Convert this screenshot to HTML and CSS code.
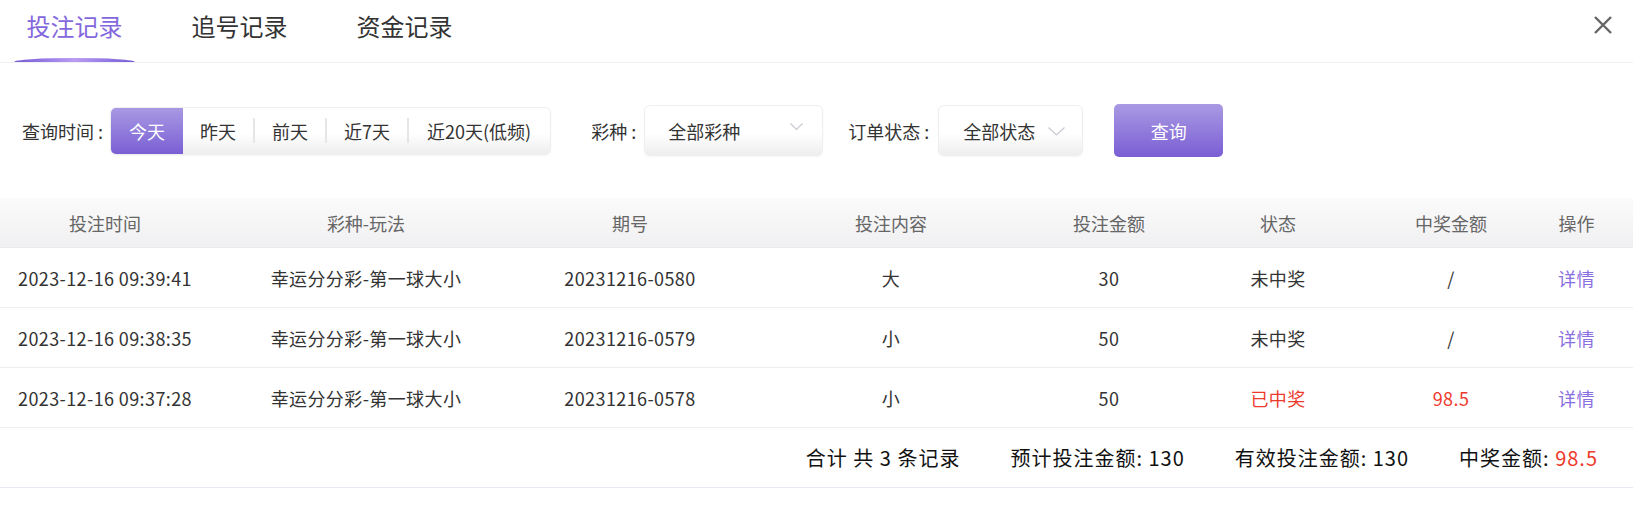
FILE: index.html
```html
<!DOCTYPE html>
<html lang="zh-CN">
<head>
<meta charset="utf-8">
<title>投注记录</title>
<link rel="stylesheet" href="styles.css">
</head>
<body>
<div class="panel">
  <div class="tabs">
    <div class="tab active">投注记录</div>
    <div class="tab">追号记录</div>
    <div class="tab">资金记录</div>
    <button class="close" aria-label="关闭">
      <svg width="20" height="20" viewBox="0 0 20 20"><path d="M2 2 L18 18 M18 2 L2 18" stroke="#666" stroke-width="2.4" stroke-linecap="butt" fill="none"/></svg>
    </button>
  </div>

  <div class="filters">
    <span class="label label-time">查询时间 :</span>
    <div class="segmented">
      <span class="seg on">今天</span>
      <span class="seg">昨天</span>
      <i class="sep"></i>
      <span class="seg">前天</span>
      <i class="sep"></i>
      <span class="seg">近7天</span>
      <i class="sep"></i>
      <span class="seg seg-last">近20天(低频)</span>
    </div>
    <span class="label label-lottery">彩种 :</span>
    <div class="select select-lottery">
      <span>全部彩种</span>
      <svg class="chev" width="13" height="8" viewBox="0 0 13 8"><path d="M0.5 0.5 L6.5 6.5 L12.5 0.5" stroke="#c9c9d2" stroke-width="1.2" fill="none"/></svg>
    </div>
    <span class="label label-status">订单状态 :</span>
    <div class="select select-status">
      <span>全部状态</span>
      <svg class="chev" width="17" height="9" viewBox="0 0 17 9"><path d="M0.5 0.5 L8.5 8 L16.5 0.5" stroke="#c9c9d2" stroke-width="1.2" fill="none"/></svg>
    </div>
    <button class="query">查询</button>
  </div>

  <div class="table">
    <div class="row head">
      <div>投注时间</div><div>彩种-玩法</div><div>期号</div><div>投注内容</div><div>投注金额</div><div>状态</div><div>中奖金额</div><div>操作</div>
    </div>
    <div class="row">
      <div>2023-12-16 09:39:41</div><div>幸运分分彩-第一球大小</div><div>20231216-0580</div><div>大</div><div>30</div><div>未中奖</div><div>/</div><div class="link">详情</div>
    </div>
    <div class="row">
      <div>2023-12-16 09:38:35</div><div>幸运分分彩-第一球大小</div><div>20231216-0579</div><div>小</div><div>50</div><div>未中奖</div><div>/</div><div class="link">详情</div>
    </div>
    <div class="row">
      <div>2023-12-16 09:37:28</div><div>幸运分分彩-第一球大小</div><div>20231216-0578</div><div>小</div><div>50</div><div class="red">已中奖</div><div class="red">98.5</div><div class="link">详情</div>
    </div>
    <div class="summary">
      <span>合计 共 3 条记录</span>
      <span>预计投注金额: 130</span>
      <span>有效投注金额: 130</span>
      <span>中奖金额: <em class="red">98.5</em></span>
    </div>
  </div>
</div>
</body>
</html>
```

FILE: styles.css
```css
* { box-sizing: border-box; }
html, body { margin: 0; padding: 0; background: #fff; }
body {
  font-family: "Noto Sans CJK SC", "Noto Sans", sans-serif;
  font-size: 18px;
  color: #333;
  width: 1633px;
  height: 516px;
  overflow: hidden;
}

.tabs {
  display: flex;
  align-items: flex-start;
  height: 63px;
  padding-left: 14px;
  border-bottom: 1px solid #f0f0f2;
}
.tab {
  position: relative;
  width: 121px;
  height: 62px;
  margin-right: 44px;
  padding-top: 9px;
  text-align: center;
  font-size: 24px;
  line-height: 34px;
  color: #333;
}
.tab.active { color: #8467dc; }
.tab.active::after {
  content: "";
  position: absolute;
  left: 0;
  right: 0;
  bottom: 0;
  height: 4px;
  border-radius: 50% 50% 0 0 / 100% 100% 0 0;
  background: linear-gradient(90deg, #7559d4 0%, #9c80e8 30%, #bb9cf3 50%, #9c80e8 70%, #7559d4 100%);
}
.close {
  margin-left: auto;
  margin-right: 20px;
  margin-top: 15px;
  padding: 0;
  border: 0;
  background: none;
  width: 20px;
  height: 20px;
  display: flex;
}

.filters {
  display: flex;
  align-items: center;
  height: 53px;
  margin-top: 41px;
  padding-left: 22px;
}
.label { line-height: 26px; color: #333; white-space: nowrap; }
.label-time { margin-right: 7px; }
.label-lottery { margin-left: 40px; margin-right: 8px; }
.label-status { margin-left: 25px; margin-right: 9px; }

.segmented {
  display: flex;
  align-items: center;
  height: 48px;
  border: 1px solid #eeeef0;
  border-radius: 6px;
  overflow: hidden;
  background: linear-gradient(#ffffff 55%, #eeeeee 100%);
  box-shadow: 0 1px 2px rgba(0,0,0,0.04);
}
.seg {
  display: flex;
  align-items: center;
  justify-content: center;
  height: 100%;
  padding: 0 17px;
  line-height: 26px;
  color: #333;
  white-space: nowrap;
}
.seg-last { padding: 0 19px 0 18px; }
.seg.on {
  width: 72px;
  padding: 0;
  color: #fff;
  background: linear-gradient(#a899e3, #7a5fd4);
}
.sep {
  display: block;
  width: 2px;
  height: 25px;
  background: #e6e6e8;
  flex: none;
}

.select {
  display: flex;
  align-items: center;
  justify-content: space-between;
  height: 51px;
  border: 1px solid #eeeef0;
  border-radius: 6px;
  background: linear-gradient(#ffffff 55%, #eeeeee 100%);
  line-height: 26px;
  color: #333;
  box-shadow: 0 1px 2px rgba(0,0,0,0.04);
}
.select-lottery { width: 179px; padding: 0 19px 0 23px; }
.select-lottery .chev { margin-top: -8px; }
.select-status { width: 145px; padding: 0 17px 0 24px; }
.select-status .chev { margin-top: 2px; }

.query {
  margin-left: 31px;
  width: 109px;
  height: 53px;
  border: 0;
  border-radius: 5px;
  background: linear-gradient(#a99ae3, #7a5ed4);
  color: #fff;
  font-family: inherit;
  font-size: 18px;
  line-height: 26px;
  padding: 0;
}

.table { margin-top: 41px; }
.row {
  display: grid;
  grid-template-columns: 210px 312px 216px 306px 130px 208px 138px 113px;
  height: 60px;
  border-bottom: 1px solid #eeeef0;
  align-items: center;
  text-align: center;
  line-height: 26px;
  color: #333;
  letter-spacing: 0.4px;
}
.row > div { white-space: nowrap; }
.row.head {
  height: 50px;
  color: #666;
  letter-spacing: 0;
  background: linear-gradient(#fbfbfb, #f0f0f2);
  border-bottom: 1px solid #e9e9ef;
}
.red { color: #ee3a2c; font-style: normal; }
.link { color: #8a6fe0; }

.summary {
  display: flex;
  justify-content: flex-end;
  align-items: center;
  gap: 50px;
  height: 60px;
  padding-right: 35px;
  border-bottom: 1px solid #e8ebf2;
  color: #111;
  font-size: 20px;
  line-height: 28px;
  letter-spacing: 1px;
}
```
